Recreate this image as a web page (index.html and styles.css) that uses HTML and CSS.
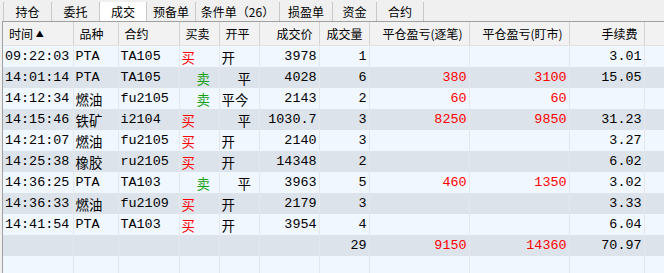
FILE: index.html
```html
<!DOCTYPE html>
<html lang="zh-CN">
<head>
  <meta charset="UTF-8">
  <title>成交</title>
  <link rel="stylesheet" href="styles.css">
</head>
<body>
  <!-- 顶部标签页 -->
  <div class="tabs">
    <div class="tab w48">持仓</div>
    <div class="tab w48">委托</div>
    <div class="tab w47 active">成交</div>
    <div class="tab w49">预备单</div>
    <div class="tab w84">条件单（26）</div>
    <div class="tab w53">损盈单</div>
    <div class="tab w44">资金</div>
    <div class="tab w48 last">合约</div>
  </div>

  <!-- 成交明细 -->
  <div class="grid">
    <table>
      <colgroup>
        <col style="width:70px">
        <col style="width:45px">
        <col style="width:61px">
        <col style="width:40px">
        <col style="width:40px">
        <col style="width:60px">
        <col style="width:50px">
        <col style="width:100px">
        <col style="width:100px">
        <col style="width:75px">
        <col style="width:20px">
      </colgroup>
      <thead>
        <tr>
          <th>时间 <span class="sort">▲</span></th>
          <th>品种</th>
          <th>合约</th>
          <th>买卖</th>
          <th>开平</th>
          <th class="r">成交价</th>
          <th class="r">成交量</th>
          <th class="r">平仓盈亏(逐笔)</th>
          <th class="r">平仓盈亏(盯市)</th>
          <th class="r">手续费</th>
          <th></th>
        </tr>
      </thead>
      <tbody>
        <tr>
          <td>09:22:03</td><td>PTA</td><td>TA105</td><td class="buy">买</td><td>开</td>
          <td class="r">3978</td><td class="r">1</td><td class="r red"></td><td class="r red"></td><td class="r">3.01</td><td></td>
        </tr>
        <tr>
          <td>14:01:14</td><td>PTA</td><td>TA105</td><td class="sell">卖</td><td class="ind">平</td>
          <td class="r">4028</td><td class="r">6</td><td class="r red">380</td><td class="r red">3100</td><td class="r">15.05</td><td></td>
        </tr>
        <tr>
          <td>14:12:34</td><td>燃油</td><td>fu2105</td><td class="sell">卖</td><td>平今</td>
          <td class="r">2143</td><td class="r">2</td><td class="r red">60</td><td class="r red">60</td><td class="r"></td><td></td>
        </tr>
        <tr>
          <td>14:15:46</td><td>铁矿</td><td>i2104</td><td class="buy">买</td><td class="ind">平</td>
          <td class="r">1030.7</td><td class="r">3</td><td class="r red">8250</td><td class="r red">9850</td><td class="r">31.23</td><td></td>
        </tr>
        <tr>
          <td>14:21:07</td><td>燃油</td><td>fu2105</td><td class="buy">买</td><td>开</td>
          <td class="r">2140</td><td class="r">3</td><td class="r red"></td><td class="r red"></td><td class="r">3.27</td><td></td>
        </tr>
        <tr>
          <td>14:25:38</td><td>橡胶</td><td>ru2105</td><td class="buy">买</td><td>开</td>
          <td class="r">14348</td><td class="r">2</td><td class="r red"></td><td class="r red"></td><td class="r">6.02</td><td></td>
        </tr>
        <tr>
          <td>14:36:25</td><td>PTA</td><td>TA103</td><td class="sell">卖</td><td class="ind">平</td>
          <td class="r">3963</td><td class="r">5</td><td class="r red">460</td><td class="r red">1350</td><td class="r">3.02</td><td></td>
        </tr>
        <tr>
          <td>14:36:33</td><td>燃油</td><td>fu2109</td><td class="buy">买</td><td>开</td>
          <td class="r">2179</td><td class="r">3</td><td class="r red"></td><td class="r red"></td><td class="r">3.33</td><td></td>
        </tr>
        <tr>
          <td>14:41:54</td><td>PTA</td><td>TA103</td><td class="buy">买</td><td>开</td>
          <td class="r">3954</td><td class="r">4</td><td class="r red"></td><td class="r red"></td><td class="r">6.04</td><td></td>
        </tr>
        <tr class="total">
          <td></td><td></td><td></td><td></td><td></td>
          <td class="r"></td><td class="r">29</td><td class="r red">9150</td><td class="r red">14360</td><td class="r">70.97</td><td></td>
        </tr>
        <tr>
          <td></td><td></td><td></td><td></td><td></td><td></td><td></td><td></td><td></td><td></td><td></td>
        </tr>
      </tbody>
    </table>
  </div>
</body>
</html>
```

FILE: styles.css
```css
/* 全体 */
body {
  margin: 0;
  background: #f0f0f0;
  font-family: "Noto Sans CJK SC", sans-serif;
  font-size: 12px;
  color: #000;
  overflow: hidden;
  height: 273px;
}

/* 标签页 */
.tabs {
  display: flex;
  height: 21px;
  padding: 2px 0 0 3px;
  box-sizing: border-box;
}

.tab {
  box-sizing: border-box;
  height: 19px;
  line-height: 19px;
  text-align: center;
  border-left: 1px solid #c8c8c8;
}

.tab.last {
  border-right: 1px solid #c8c8c8;
}

.tab.active {
  background: #fff;
}

.w44 { width: 44px; }
.w47 { width: 47px; }
.w48 { width: 48px; }
.w49 { width: 49px; }
.w53 { width: 53px; }
.w84 { width: 84px; }

/* 表格 */
.grid {
  margin-left: 2px;
  border-left: 1px solid #a0a0a0;
  border-top: 1px solid #a0a0a0;
}

table {
  table-layout: fixed;
  width: 661px;
  border-collapse: collapse;
}

th {
  height: 23px;
  padding: 0 6px;
  font-weight: normal;
  text-align: left;
  background: #f2f2f2;
  border-right: 1px solid #d4d4d4;
  border-bottom: 1px solid #e2e2e2;
  white-space: nowrap;
  overflow: hidden;
}

th.r {
  text-align: right;
}

.sort {
  font-size: 8px;
  position: relative;
  top: -2px;
}

td {
  height: 21px;
  padding: 0 2px;
  font-family: "Liberation Mono", "Noto Sans CJK SC", monospace;
  font-size: 13.4px;
  white-space: nowrap;
  overflow: hidden;
  border-right: 1px solid #e4e8ec;
  background: #f0f7ff;
}

tbody tr:nth-child(even) td {
  background: #dde3ea;
}

td.r {
  text-align: right;
}

.buy {
  color: #ff0000;
}

.sell {
  color: #15a015;
  padding-left: 17px;
}

.ind {
  padding-left: 18px;
}

.red {
  color: #ff0000;
}
```
